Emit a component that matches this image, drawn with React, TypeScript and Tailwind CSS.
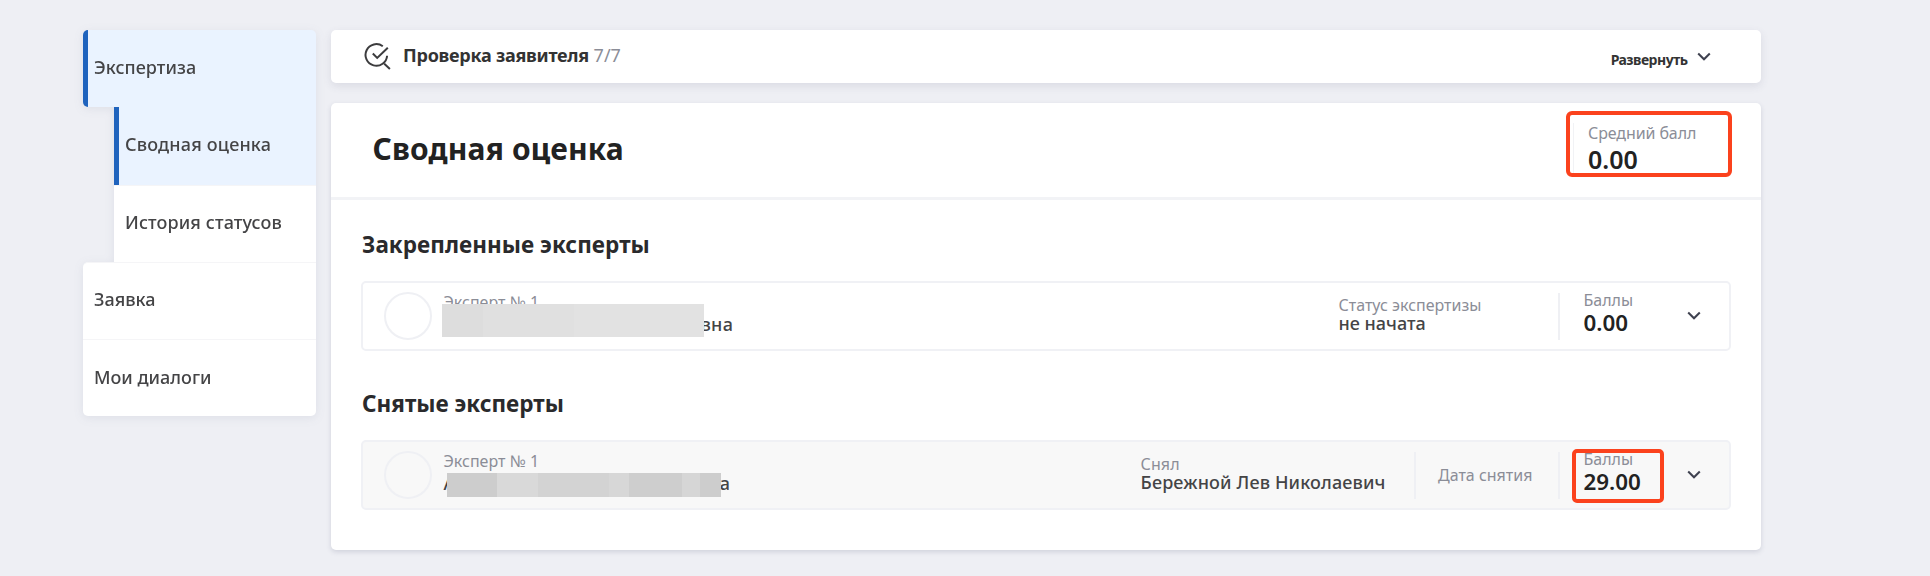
import type { ReactNode } from 'react';

function Chevron() {
  return (
    <svg width="14" height="10" viewBox="0 0 14 10" fill="none" stroke="#3f4250" strokeWidth="2.1">
      <path d="M1.2 1.6 7 7.2 12.8 1.6" />
    </svg>
  );
}

function CheckSearchIcon() {
  return (
    <svg width="28" height="28" viewBox="0 0 28 28" fill="none" stroke="#3c3c3e" strokeWidth="2" className="shrink-0">
      <path d="M19.8 3.3A10.8 10.8 0 1 0 24.1 12.7M9.8 10.5l4.4 4.4L24.8 4.7M21.3 20.7l5.6 5.3" />
    </svg>
  );
}

function NavItem({ label, active, sub, className = '' }: { label: string; active?: boolean; sub?: boolean; className?: string }) {
  return (
    <a
      className={`flex h-[77.25px] items-center pb-[2px] text-[18px] font-medium ${sub ? 'ml-[31px]' : ''} ${
        active ? 'border-l-[5px] border-[#1f63bd] bg-[#eaf3ff] pl-[6px]' : 'border-t border-[#f5f5f7] bg-white pl-[11px]'
      } ${className}`}
    >
      {label}
    </a>
  );
}

function Field({ label, value, className = '' }: { label: string; value?: string; className?: string }) {
  return (
    <div className={`shrink-0 ${value ? 'pb-[5px]' : ''} ${className}`}>
      <div className="text-[16px] leading-[18px] text-[#8b8d97]">{label}</div>
      {value && <div className="text-[18px] leading-[18px] font-medium">{value}</div>}
    </div>
  );
}

function Score({ value, highlighted }: { value: string; highlighted?: boolean }) {
  return (
    <div className="relative ml-[23.5px] w-[103.5px] shrink-0 self-start pt-[8px]">
      <div className="text-[16px] leading-[18px] text-[#8b8d97]">Баллы</div>
      <div className="text-[22.4px] leading-[28px] font-semibold text-[#222]">{value}</div>
      {highlighted && (
        <div className="absolute top-[7px] -left-[12px] h-[54px] w-[92px] rounded-[5px] border-4 border-[#fb421d]" />
      )}
    </div>
  );
}

function ExpertRow({ name, muted, children }: { name: ReactNode; muted?: boolean; children: ReactNode }) {
  return (
    <div
      className={`flex h-[70px] items-center rounded-[5px] border-2 border-[#f0f1f5] pl-[20.5px] ${muted ? 'bg-[#f8f8f8]' : 'bg-white'}`}
    >
      <div className="size-[48px] shrink-0 rounded-full border-2 border-[#eff0f4]" />
      <div className="ml-[12px] w-[320px] shrink-0 self-start pt-[9px]">
        <div className="text-[16px] leading-[20px] text-[#8b8d97]">Эксперт № 1</div>
        <div className="relative flex h-[24px] text-[18px] leading-[24px] font-medium">{name}</div>
      </div>
      <div className="flex grow items-center justify-end self-stretch">{children}</div>
      <div className="mr-[27.5px] shrink-0">
        <Chevron />
      </div>
    </div>
  );
}

const Divider = () => <div className="h-[47px] w-[2px] shrink-0 bg-[#eff0f4]" />;

export default function App() {
  return (
    <div className="flex h-[576px] items-start overflow-hidden bg-[#eeeff4] pt-[30px] pl-[83px] font-['Noto_Sans',sans-serif] text-[#444446]">
      <nav className="w-[233px] shrink-0 rounded-[5px] drop-shadow-[0_2px_5px_rgba(70,75,110,0.09)]">
        <NavItem label="Экспертиза" active className="rounded-l-[5px] rounded-tr-[5px] tracking-[0.05px]" />
        <NavItem label="Сводная оценка" active sub className="tracking-[0.18px]" />
        <NavItem label="История статусов" sub className="tracking-[0.12px]" />
        <NavItem label="Заявка" className="rounded-tl-[5px]" />
        <NavItem label="Мои диалоги" className="rounded-b-[5px]" />
      </nav>

      <main className="ml-[15px] w-[1429.5px] shrink-0">
        <header className="flex h-[53px] items-center rounded-[5px] bg-white pr-[50px] pl-[32px] shadow-[0_3px_8px_rgba(70,75,110,0.12)]">
          <CheckSearchIcon />
          <div className="ml-[12px] pb-[2px] text-[18px]">
            <span className="font-bold tracking-[-0.25px] text-[#333]">Проверка заявителя</span>{' '}
            <span className="text-[#8b8d97]">7/7</span>
          </div>
          <div className="ml-auto flex items-center gap-[9px] text-[14px] font-bold tracking-[-0.5px] text-[#333]">
            <span className="pt-[5px]">Развернуть</span>
            <Chevron />
          </div>
        </header>

        <section className="mt-[20px] h-[447px] rounded-[5px] bg-white shadow-[0_2px_5px_rgba(70,75,110,0.18)]">
          <div className="flex h-[97px] border-b-[3px] border-[#f2f3f6] pl-[41.5px]">
            <h1 className="pt-[25px] text-[30px] leading-[41px] font-bold tracking-[0.15px] text-[#222]">Сводная оценка</h1>
            <div className="mt-[8px] mr-[29px] ml-auto h-[66px] w-[166px] rounded-[6px] border-4 border-[#fb421d] pl-[3px]">
              <div className="mt-[8px] h-[50px] border-l border-[#f1f2f5] pl-[14.5px]">
                <div className="text-[16px] leading-[20px] tracking-[-0.1px] text-[#8b8d97]">Средний балл</div>
                <div className="text-[25px] leading-[33px] font-semibold text-[#222]">0.00</div>
              </div>
            </div>
          </div>

          <div className="px-[30px] pt-[29px]">
            <h2 className="h-[52px] pl-px text-[22.5px] leading-[31px] font-bold tracking-[0.04px] text-[#2a2a2c]">Закрепленные эксперты</h2>
            <ExpertRow
              name={
                <>
                  <span className="ml-[257px] tracking-[0.3px]">вна</span>
                  <span className="absolute -top-[8px] -left-[2px] flex h-[33px] w-[262px] bg-[#e2e2e2]">
                    <span className="w-[41px] bg-[#dddddd]" />
                    <span className="w-[91px] bg-[#e0e0e0]" />
                  </span>
                </>
              }
            >
              <Field label="Статус экспертизы" value="не начата" className="w-[219.5px]" />
              <Divider />
              <Score value="0.00" />
            </ExpertRow>

            <h2 className="mt-[37px] h-[52px] pl-px text-[22.5px] leading-[31px] font-bold text-[#2a2a2c]">Снятые эксперты</h2>
            <ExpertRow
              muted
              name={
                <>
                  <span>А</span>
                  <span className="ml-[264.5px]">а</span>
                  <span className="absolute top-[2px] left-[3px] flex h-[24px] w-[274px] bg-[#d2d2d2]">
                    <span className="w-[50px] bg-[#cdcdcd]" />
                    <span className="w-[41px] bg-[#d9d9d9]" />
                    <span className="w-[71px] bg-[#d3d3d3]" />
                    <span className="w-[20px] bg-[#d7d7d7]" />
                    <span className="w-[53px] bg-[#cecece]" />
                    <span className="w-[18px] bg-[#d6d6d6]" />
                    <span className="w-[21px] bg-[#cdcdcd]" />
                  </span>
                </>
              }
            >
              <Field label="Снял" value="Бережной Лев Николаевич" className="w-[273px] tracking-[0.15px]" />
              <Divider />
              <Field label="Дата снятия" className="ml-[22.5px] w-[120px]" />
              <Divider />
              <Score value="29.00" highlighted />
            </ExpertRow>
          </div>
        </section>
      </main>
    </div>
  );
}
